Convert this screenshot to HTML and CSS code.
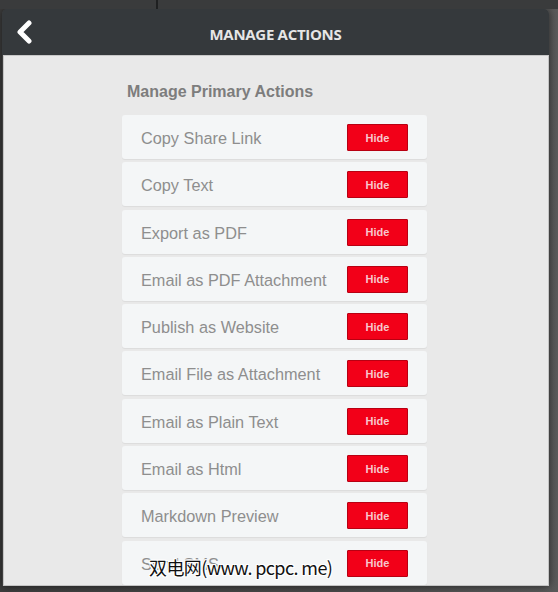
FILE: index.html
```html
<!DOCTYPE html>
<html>
<head>
<meta charset="utf-8">
<link rel="stylesheet" href="styles.css">
</head>
<body>
<div class="backdrop">
  <div class="top-strip"><span class="divider"></span></div>
  <div class="modal">
    <header class="header">
      <svg class="back" width="20" height="24" viewBox="0 0 20 24"><path d="M14 3 L5 12 L14 21" fill="none" stroke="#fff" stroke-width="5" stroke-linecap="round" stroke-linejoin="round"/></svg>
      <h1 class="title">MANAGE ACTIONS</h1>
    </header>
    <main class="content">
      <h2 class="section">Manage Primary Actions</h2>
      <ul class="list">
        <li class="row"><span class="label">Copy Share Link</span><button class="hide">Hide</button></li>
        <li class="row"><span class="label">Copy Text</span><button class="hide">Hide</button></li>
        <li class="row"><span class="label">Export as PDF</span><button class="hide">Hide</button></li>
        <li class="row"><span class="label">Email as PDF Attachment</span><button class="hide">Hide</button></li>
        <li class="row"><span class="label">Publish as Website</span><button class="hide">Hide</button></li>
        <li class="row"><span class="label">Email File as Attachment</span><button class="hide">Hide</button></li>
        <li class="row"><span class="label">Email as Plain Text</span><button class="hide">Hide</button></li>
        <li class="row"><span class="label">Email as Html</span><button class="hide">Hide</button></li>
        <li class="row"><span class="label">Markdown Preview</span><button class="hide">Hide</button></li>
        <li class="row"><span class="label">Send SMS</span><button class="hide">Hide</button></li>
      </ul>
      <div class="watermark">双电网(www. pcpc. me)</div>
    </main>
  </div>
</div>
</body>
</html>
```
FILE: styles.css
```css
html, body {
  margin: 0;
  padding: 0;
  background: #4a4a4a;
  width: 558px;
  height: 592px;
  overflow: hidden;
}
.backdrop {
  width: 558px;
  height: 592px;
  background: linear-gradient(to right, #3e3e3e 0%, #4a4a4a 60%, #5a5a5a 100%);
}
.top-strip {
  height: 9px;
  background: #3a3b3c;
  position: relative;
}
.divider {
  position: absolute;
  left: 156px;
  top: 0;
  width: 2px;
  height: 9px;
  background: #1f2021;
}
.modal {
  margin-left: 2px;
  width: 547px;
  height: 577px;
  display: flex;
  flex-direction: column;
  box-shadow: 0 0 8px rgba(0,0,0,0.6);
  border-radius: 5px 5px 0 0;
  overflow: hidden;
}
.header {
  height: 46px;
  background: #35393c;
  display: flex;
  align-items: center;
  justify-content: center;
  position: relative;
  flex: none;
}
.back {
  position: absolute;
  left: 13px;
  top: 11px;
}
.title {
  margin: 0;
  padding-top: 3px;
  font-family: "Open Sans", "Liberation Sans", sans-serif;
  font-weight: 700;
  font-size: 15px;
  color: #e6e6e6;
  letter-spacing: -0.3px;
}
.content {
  flex: 1;
  background: #e9e9e9;
  border: 1px solid #c4c4c4;
  border-top: 1px solid #c8c8c8;
  margin-left: 1px;
  padding: 26px 0 0 118px;
  overflow: hidden;
  position: relative;
}
.section {
  margin: 0 0 13px 5px;
  font-family: "Liberation Sans", Arial, sans-serif;
  font-weight: 700;
  font-size: 16px;
  line-height: 20px;
  color: #7d7d7d;
}
.list {
  list-style: none;
  margin: 0;
  padding: 0;
  width: 305px;
  display: flex;
  flex-direction: column;
  gap: 3.3px;
}
.row {
  height: 44px;
  background: #f4f6f7;
  border-radius: 3px;
  box-shadow: 0 1px 1px rgba(0,0,0,0.06);
  display: flex;
  align-items: center;
  justify-content: space-between;
  padding: 0 19px;
  flex: none;
  font-family: "Liberation Sans", Arial, sans-serif;
  font-size: 16.3px;
  color: #8e8e8e;
}
.label {
  padding-top: 3px;
}
.hide {
  width: 61px;
  height: 27px;
  margin-top: 1px;
  background: #f20018;
  border: 1px solid #b80012;
  border-radius: 1px;
  color: #f7c7cc;
  font-family: "Liberation Sans", Arial, sans-serif;
  font-weight: 700;
  font-size: 11px;
  padding: 0;
}
.watermark {
  position: absolute;
  left: 145px;
  top: 498px;
  font-family: "Noto Sans CJK SC", "Liberation Sans", sans-serif;
  font-size: 18px;
  color: #111;
  letter-spacing: -0.6px;
  text-shadow: 1px 0 0 #fff, -1px 0 0 #fff, 0 1px 0 #fff, 0 -1px 0 #fff, 1px 1px 0 #fff, -1px -1px 0 #fff, 1px -1px 0 #fff, -1px 1px 0 #fff;
}
```
